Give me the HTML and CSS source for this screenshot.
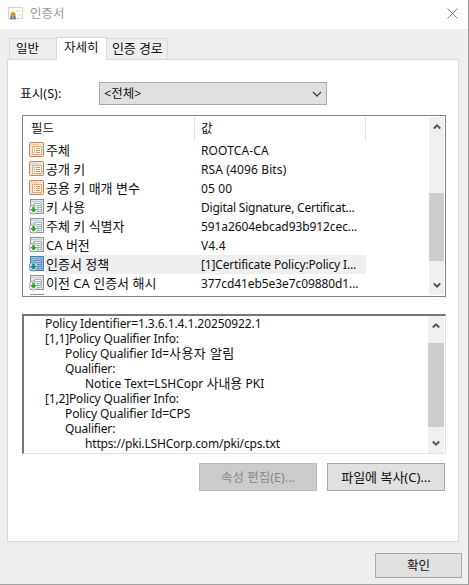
FILE: index.html
```html
<!DOCTYPE html>
<html lang="ko">
<head>
<meta charset="utf-8">
<title>인증서</title>
<link rel="stylesheet" href="styles.css">
</head>
<body>
<svg class="defs" width="0" height="0">
  <symbol id="field" viewBox="0 0 16 16"><rect x=".5" y=".5" width="14" height="14" rx="1" fill="#fbe3cd" stroke="#b98763"/><path d="M1 2.500h13" stroke="#f2c8a2"/><path d="M3.500 4.500h9v8h-9z" fill="#fff6ea" stroke="#d9a77e"/><path d="M5 6.500h1m1 0h4M5 8.500h1m1 0h4M5 10.500h1m1 0h4" stroke="#c39a78"/><path d="M10 2.500h1m1 0h1" stroke="#fff"/></symbol>
  <symbol id="ext" viewBox="0 0 16 16"><rect x="1.500" y=".5" width="13" height="14" fill="#e5e9ee" stroke="#8d9299"/><path d="M2 2.500h12" stroke="#c5cbd4"/><path d="M5.500 4.500h7v8h-7z" fill="#fff" stroke="#a5b1c4"/><path d="M8 6.500h4M8 8.500h4M8 10.500h4" stroke="#9aa8bd"/><circle cx="4.500" cy="10.500" r="4.500" fill="#f3f8f1" stroke="#8b928c" stroke-width=".8"/><path d="M3.300 7.500h2.400V10H8l-3.500 3.800L1 10h2.300z" fill="#2fa52d"/></symbol>
  <symbol id="extsel" viewBox="0 0 16 16"><rect x="1.500" y=".5" width="13" height="14" fill="#8fbde2" stroke="#4f7ea8"/><path d="M2 2.500h12" stroke="#79a9d3"/><path d="M5.500 4.500h7v8h-7z" fill="#a5cdec" stroke="#5f92c2"/><path d="M8 6.500h4M8 8.500h4M8 10.500h4" stroke="#5c8dbc"/><circle cx="4.500" cy="10.500" r="4.500" fill="#b4d9ec" stroke="#4b7fa0" stroke-width=".8"/><path d="M3.300 7.500h2.400V10H8l-3.500 3.800L1 10h2.300z" fill="#169070"/></symbol>
  <symbol id="up" viewBox="0 0 8 7"><path d="M.8 5.500 4 2.300l3.200 3.200" fill="none" stroke="#555" stroke-width="2"/></symbol>
  <symbol id="down" viewBox="0 0 8 7"><path d="M.8 1.500 4 4.700l3.200-3.200" fill="none" stroke="#555" stroke-width="2"/></symbol>
</svg>
<main class="dialog">
  <header class="titlebar">
    <svg class="cert" viewBox="0 0 16 14"><rect x=".5" y=".5" width="14" height="11" fill="#fffdf7" stroke="#edcfac"/><path d="M8 3h4v2H8zm2 4h3v2h-3z" fill="#e5edf5"/><path d="M2.500 9h2v4l-1-1-1 1zm3 0h2v4l-1-1-1 1z" fill="#315fb5"/><circle cx="5" cy="7.500" r="2.500" fill="#c89a20"/></svg>
    <span class="title">인증서</span>
    <svg class="close" viewBox="0 0 11 11"><path d="m.5.5 10 10m0-10-10 10" stroke="#858585" fill="none"/></svg>
  </header>
  <nav class="tabs"><span class="tab general">일반</span><span class="tab active">자세히</span><span class="tab path">인증 경로</span></nav>
  <section class="panel">
    <div class="filter"><label>표시(S):</label><div class="select"><span>&lt;전체&gt;</span><svg viewBox="0 0 10 6"><path d="m1 1 4 4 4-4" fill="none" stroke="#444" stroke-width="1.300"/></svg></div></div>
    <div class="list">
      <div class="table">
        <div class="head"><span>필드</span><span>값</span></div>
        <div class="row"><svg><use href="#field"/></svg><span class="name">주체</span><span class="loose">ROOTCA-CA</span></div>
        <div class="row"><svg><use href="#field"/></svg><span class="name">공개 키</span><span class="loose">RSA (4096 Bits)</span></div>
        <div class="row"><svg><use href="#field"/></svg><span class="name">공용 키 매개 변수</span><span class="loose">05 00</span></div>
        <div class="row"><svg><use href="#ext"/></svg><span class="name">키 사용</span><span class="tight">Digital Signature, Certificat...</span></div>
        <div class="row"><svg><use href="#ext"/></svg><span class="name">주체 키 식별자</span><span class="snug">591a2604ebcad93b912cec...</span></div>
        <div class="row"><svg><use href="#ext"/></svg><span class="name">CA 버전</span><span class="loose">V4.4</span></div>
        <div class="row selected"><svg><use href="#extsel"/></svg><span class="name">인증서 정책</span><span class="trim">[1]Certificate Policy:Policy I...</span></div>
        <div class="row"><svg><use href="#ext"/></svg><span class="name">이전 CA 인증서 해시</span><span class="snug">377cd41eb5e3e7c09880d1...</span></div>
        <div class="row"><svg><use href="#ext"/></svg></div>
      </div>
      <div class="scroll"><svg><use href="#up"/></svg><div class="thumb"></div><svg><use href="#down"/></svg></div>
    </div>
    <div class="details">
      <div class="lines">
        <div class="snug">Policy Identifier=1.3.6.1.4.1.20250922.1</div>
        <div class="trim">[1,1]Policy Qualifier Info:</div>
        <div class="in1"><span class="snug">Policy Qualifier Id=</span><span class="ko wide">사용자 알림</span></div>
        <div class="in1 trim">Qualifier:</div>
        <div class="in2">Notice Text=LSHCopr <span class="ko">사내용</span> PKI</div>
        <div class="trim">[1,2]Policy Qualifier Info:</div>
        <div class="in1 snug">Policy Qualifier Id=CPS</div>
        <div class="in1 trim">Qualifier:</div>
        <div class="in2 trim">https://pki.LSHCorp.com/pki/cps.txt</div>
      </div>
      <div class="scroll"><svg><use href="#up"/></svg><div class="thumb"></div><svg><use href="#down"/></svg></div>
    </div>
    <div class="actions"><button disabled>속성 편집(E)...</button><button class="copy">파일에 복사(C)...</button></div>
  </section>
  <button class="ok">확인</button>
</main>
</body>
</html>
```
FILE: styles.css
```css
* { box-sizing: border-box; }
body { margin: 0; font: 12px/19px "Noto Sans", "Noto Sans CJK KR", sans-serif; color: #101010; background: #efefef; overflow: hidden; }
.defs { position: absolute; }
.dialog { width: 469px; height: 585px; display: flex; flex-direction: column; border-right: 1px solid #999; border-bottom: 1px solid #a2a2a2; }
.titlebar { height: 29px; background: #fff; display: flex; align-items: center; padding: 0 10px 2px 8px; flex: none; }
.cert { width: 16px; height: 14px; }
.title { color: #999; font-size: 12.500px; margin-left: 6px; flex: 1; }
.close { width: 11px; height: 11px; }
.tabs { height: 31px; padding: 8px 0 0 9px; display: flex; align-items: flex-end; flex: none; margin-bottom: -1px; z-index: 1; }
.tab { height: 21px; border: 1px solid #d9d9d9; border-bottom: 0; padding-left: 6px; line-height: 20px; font-size: 12.500px; margin-bottom: 1px; white-space: nowrap; }
.general { width: 47px; border-right: 0; }
.active { height: 23px; width: 51px; background: #fff; padding-left: 7px; margin-bottom: 0; }
.path { width: 61px; border-left: 0; font-size: 13px; letter-spacing: -.1px; padding-left: 5px; line-height: 19px; }
.panel { width: 452px; height: 483px; margin-left: 7px; border: 1px solid #d9d9d9; background: #fff; padding: 22px 13px 0 14px; flex: none; }
.filter { display: flex; height: 23px; align-items: center; }
.filter label { width: 77px; margin-left: -2px; margin-right: 2px; font-size: 12.700px; }
.select { width: 228px; height: 23px; border: 1px solid #aaa; background: #e0e0e0; display: flex; align-items: center; justify-content: space-between; padding: 0 4px; font-size: 12.500px; }
.select svg { width: 10px; height: 6px; }
.list { height: 182px; width: 424px; border: 1px solid #82828a; margin-top: 10px; padding: 1px 1px 1px 0; display: flex; justify-content: space-between; overflow: hidden; }
.table { width: 343px; overflow: hidden; }
.head { display: flex; height: 24px; line-height: 24px; font-size: 12.500px; }
.head span { border-right: 1px solid #e3e3e3; width: 172px; padding-left: 8px; flex: none; }
.head span + span { width: 171px; padding-left: 6px; }
.row { display: grid; grid-template-columns: 17px 155px 1fr; height: 19px; line-height: 20px; padding-left: 6px; white-space: nowrap; }
.row svg { width: 16px; height: 16px; margin-top: 1px; }
.name { font-size: 13px; line-height: 18px; }
.loose { letter-spacing: .12px; }
.tight { letter-spacing: -.23px; }
.trim { letter-spacing: -.17px; }
.snug { letter-spacing: -.09px; }
.ko { font-size: 13px; line-height: 1; }
.wide { letter-spacing: .4px; }
.selected { background: linear-gradient(to right, transparent 22px, #efefef 22px); }
.scroll { width: 15px; background: #f0f0f0; display: flex; flex-direction: column; align-items: center; padding: 6px 0; }
.scroll svg { width: 8px; height: 7px; flex: none; }
.scroll svg:last-child { margin-top: auto; }
.thumb { width: 15px; height: 68px; background: #cdcdcd; margin-top: 63px; flex: none; }
.details { width: 424px; height: 140px; margin-top: 17px; border: solid #e3e3e3; border-width: 2px 1px 1px 2px; border-top-color: #777; border-left-color: #777; display: flex; justify-content: space-between; padding-right: 1px; }
.lines { line-height: 15px; padding-left: 21px; white-space: nowrap; overflow: hidden; }
.lines > div { height: 15px; }
.details .scroll { width: 16px; }
.details .thumb { width: 16px; height: 84px; margin-top: 14px; }
.in1 { padding-left: 20px; }
.in2 { padding-left: 40px; }
.actions { display: flex; justify-content: flex-end; gap: 10px; margin: 9px 0 0; }
button { width: 118px; height: 28px; padding: 0; border: 1px solid #aaa; border-radius: 0; background: #e0e0e0; font: inherit; font-size: 12.500px; color: #111; }
button:disabled { background: #ccc; border-color: #bbb; color: #888; }
.copy { font-size: 13px; }
.ok { width: 87px; height: 25px; margin: 11px 0 0 375px; flex: none; }
```
